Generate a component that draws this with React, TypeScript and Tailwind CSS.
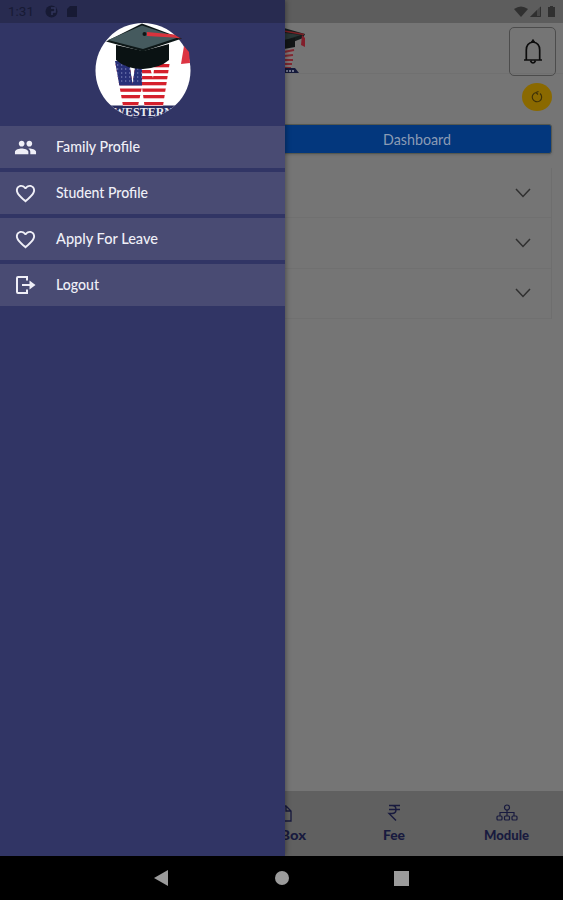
import React from "react";
import { MdPeople, MdFavoriteBorder } from "react-icons/md";

const stripes = [41, 47, 53, 59, 65.5, 72, 79];
const starRows = [42, 46, 50, 54, 58];

function Logo({ className }: { className: string }) {
  return (
    <svg className={className} viewBox="0 0 96 96">
      <defs>
        <clipPath id="disc"><circle cx="48" cy="47.5" r="47.5" /></clipPath>
        <clipPath id="letter"><path d="M20 38H34L37.500 61L41 38H53L58 55L60 38H75L68 83H49.500L47 64L43 83H28Z" /></clipPath>
      </defs>
      <g clipPath="url(#disc)">
        <rect width="96" height="96" fill="#fff" />
        <rect y="82.500" width="96" height="14" fill="#282c5f" />
        <text x="18" y="92.500" textLength="60" lengthAdjust="spacingAndGlyphs" fontFamily="Liberation Serif, serif" fontWeight="bold" fontSize="12" fill="#e9eaf2">WESTERN</text>
        <g clipPath="url(#letter)">
          <rect x="18" y="36" width="60" height="48" fill="#fff" />
          {stripes.map((y) => <rect key={y} x="18" y={y} width="60" height="3.3" fill="#d5202c" />)}
          <path d="M18 36H47V62.500H18Z" fill="#283078" />
          {starRows.map((y) => <path key={y} d={`M22 ${y}H48`} stroke="#8d95c6" strokeWidth="1.1" strokeDasharray="1.3 2.7" />)}
        </g>
      </g>
      <path d="M21 22V37Q31 46 48 46Q65 45 74 37V21L48 28Z" fill="#0a1213" />
      <path d="M11 18.500L47 0.500L87 15.500L48 28.500Z" fill="#0d1717" />
      <path d="M13 17L47 2.500L83 14.500L48 26Z" fill="#455a5e" />
      <circle cx="49.500" cy="11" r="2" fill="#101516" />
      <path d="M52 9L79 11.500L86 15.500L78 14.500L52 13Z" fill="#d9333d" />
      <path d="M89 23L86 41L95 40L94 29Z" fill="#dc3442" />
    </svg>
  );
}

function LogoutIcon() {
  return (
    <svg className="h-[22px] w-[22px]" viewBox="0 0 22 22" fill="none" stroke="currentColor" strokeWidth="2">
      <path d="M13 6.500V3H4Q3 3 3 4V18Q3 19 4 19H13V15.500M8 11H19" />
      <path d="M15.500 6.500L21.500 11L15.500 15.500Z" fill="currentColor" stroke="none" />
    </svg>
  );
}

const items = [
  { label: "Family Profile", width: 84, icon: <MdPeople size={23} /> },
  { label: "Student Profile", width: 92, icon: <MdFavoriteBorder size={23} /> },
  { label: "Apply For Leave", width: 102, icon: <MdFavoriteBorder size={23} /> },
  { label: "Logout", width: 43, icon: <LogoutIcon /> },
];

function Label({ text, width, baseline = 17, className }: { text: string; width: number; baseline?: number; className: string }) {
  return (
    <svg className={`shrink-0 overflow-visible ${className}`} style={{ width: width + 4 }} height="24">
      <text x="2" y={baseline} textLength={width} lengthAdjust="spacingAndGlyphs" fill="currentColor">{text}</text>
    </svg>
  );
}

export default function App() {
  return (
    <div className="relative flex h-[900px] w-[563px] flex-col overflow-hidden bg-[#757575] font-['Lato',sans-serif]">
      <div className="flex h-[23px] shrink-0 items-center justify-end bg-[#5d5d5d] pr-[7px] text-[#303030]">
        <svg className="h-[14px] w-[42px]" viewBox="0 0 42 14" fill="currentColor">
          <path d="M0 4Q7 -1 14 4L7 12Z" /><path d="M16 12L27 1V12Z" opacity=".45" /><path d="M16 12L23 5V12Z" /><path d="M26.500 2V11.500H17" fill="none" stroke="currentColor" />
          <path d="M34 2H36V1H39V2H41V12H34Z" />
        </svg>
      </div>
      <header className="flex h-[51px] shrink-0 items-start border-b border-[#707070] pl-[257px] pr-[7px]">
        <svg className="mt-[4px] h-12 w-[50px]" viewBox="0 0 50 48">
          <path d="M27 1L48 7L46 11L36 15L27 16Z" fill="#151c1d" /><path d="M28 6L44 8L28 13Z" fill="#293636" />
          <path d="M27 4L47 7.500" stroke="#7a2025" strokeWidth="1.300" />
          <path d="M45 8L48 11V20L44 18Z" fill="#821f2b" /><path d="M27 13L38 11V20L27 22Z" fill="#111516" />
          <path d="M27 23L37 21L34 42H27Z" fill="#817779" />
          <path d="M27 25L37 23M27 29L36 28M27 33H36M27 37H35M27 41H34" stroke="#802831" strokeWidth="2" />
          <path d="M27 41H38L42 46H27Z" fill="#151a3b" /><path d="M29 44H38" stroke="#71758c" strokeWidth="2" strokeDasharray="2 1" />
        </svg>
        <div className="ml-auto mt-[4px] flex h-[49px] w-[47px] shrink-0 items-center justify-center rounded-[5px] border border-[#4c4c4c]">
          <svg className="h-[26px] w-[20px]" viewBox="0 0 20 26" fill="none" stroke="#0c0c0c" strokeWidth="1.700">
            <path d="M1 21H19M3.300 21V11Q3.300 4 10 3Q16.700 4 16.700 11V21M7.500 22Q10 26 12.500 22" />
            <path d="M8 3.500L10 .5L12 3.500Z" fill="#0c0c0c" strokeWidth="1" />
          </svg>
        </div>
      </header>
      <div className="flex h-[50px] shrink-0 justify-end pr-[11px] pt-[9px]">
        <div className="flex h-[28px] w-[30px] items-center justify-center rounded-[50%] bg-[#8a6900]">
          <svg className="h-3 w-3" viewBox="0 0 12 12" fill="none" stroke="#3c3008" strokeWidth="1.100"><path d="M9 2.500A4.700 4.700 0 1 1 5 1.500M5 1.500L7.500 .5M5 1.500L7 3.500" /></svg>
        </div>
      </div>
      <div className="mx-[11px] flex h-[30px] shrink-0 items-center justify-center rounded-[3px] border border-[#555850] bg-[#03377d] pl-[271px] text-[#8b9cb5] shadow-sm">
        <Label text="Dashboard" width={68} baseline={18} className="text-[15px]" />
      </div>
      <div className="mx-[11px] mt-[14px] flex h-[151px] shrink-0 flex-col border-r border-[#6e6e6e]">
        {[0, 1, 2].map((n) => (
          <div key={n} className="flex flex-1 items-center justify-end border-b border-[#707070] pr-[20px]">
            <svg className="h-[10px] w-[16px]" viewBox="0 0 16 10" fill="none" stroke="#303030" strokeWidth="1.500"><path d="M1 1L8 8.500L15 1" /></svg>
          </div>
        ))}
      </div>
      <nav className="mt-auto flex h-[65px] shrink-0 bg-[#606060] pl-[225px] text-[#181a3e]">
        <div className="flex flex-1 flex-col items-center pt-[13px]">
          <svg className="ml-[8px] h-[19px] w-[18px]" viewBox="0 0 18 19" fill="none" stroke="currentColor" strokeWidth="1.300"><path d="M2 2H10L15 7V17H2V2M10 2V7H15" /></svg>
          <Label text="In Box" width={42} className="ml-[7px] text-[13px] font-black" />
        </div>
        <div className="flex flex-1 flex-col items-center pt-[13px]">
          <svg className="h-[19px] w-[14px]" viewBox="0 0 14 19" fill="none" stroke="currentColor" strokeWidth="1.400"><path d="M2 1.500H13M2 5.500H13M2 1.500H5Q9 1.500 9 5.500Q9 9.500 5 9.500H2L9 16.500" /></svg>
          <Label text="Fee" width={22} className="text-[13px] font-black" />
        </div>
        <div className="flex flex-1 flex-col items-center pt-[13px]">
          <svg className="h-[19px] w-[22px]" viewBox="0 0 22 19" fill="none" stroke="currentColor" strokeWidth="1.200"><circle cx="11" cy="3.500" r="2.500" /><path d="M11 6V12M4 12V8.500H18V12" /><rect x="1" y="12" width="5" height="4" rx="1" /><rect x="8.500" y="12" width="5" height="4" rx="1" /><rect x="16" y="12" width="5" height="4" rx="1" /></svg>
          <Label text="Module" width={45} className="text-[13px] font-black" />
        </div>
      </nav>
      <footer className="flex h-[44px] shrink-0 items-center bg-black pl-[154px] text-[#9b9b9b]">
        <svg className="h-[16px] w-[15px]" viewBox="0 0 15 16" fill="currentColor"><path d="M0 8L14 0V16Z" /></svg>
        <div className="ml-[106px] h-[14px] w-[14px] rounded-full bg-current" />
        <div className="ml-[105px] h-[15px] w-[15px] bg-current" />
      </footer>
      <aside className="absolute left-0 top-0 flex h-[856px] w-[285px] flex-col bg-[#313565] shadow-[1px_0_5px_rgba(0,0,0,0.35)]">
        <div className="flex h-[23px] shrink-0 items-center bg-[#282b50] pl-[6px] text-[#171a34]">
          <Label text="1:31" width={26} baseline={16} className="font-['Roboto',sans-serif] text-[13px]" />
          <svg className="ml-[9px] h-[13px] w-[34px]" viewBox="0 0 34 13" fill="currentColor"><circle cx="6.500" cy="6.500" r="6" /><path d="M6 3H10V7H7V10" fill="none" stroke="#30345b" strokeWidth="1.500" /><path d="M25 1H32V12H22V4Z" /></svg>
        </div>
        <div className="flex h-[103px] shrink-0 justify-center"><Logo className="h-[96px] w-[96px]" /></div>
        <div className="flex flex-col gap-[4px]">
          {items.map((item) => (
            <div key={item.label} className="flex h-[42px] items-center bg-[#494b73] pl-[14px] text-[#efeff7]">
              <span className="w-[40px]">{item.icon}</span>
              <Label text={item.label} width={item.width} className="text-[15px] font-medium" />
            </div>
          ))}
        </div>
      </aside>
    </div>
  );
}
